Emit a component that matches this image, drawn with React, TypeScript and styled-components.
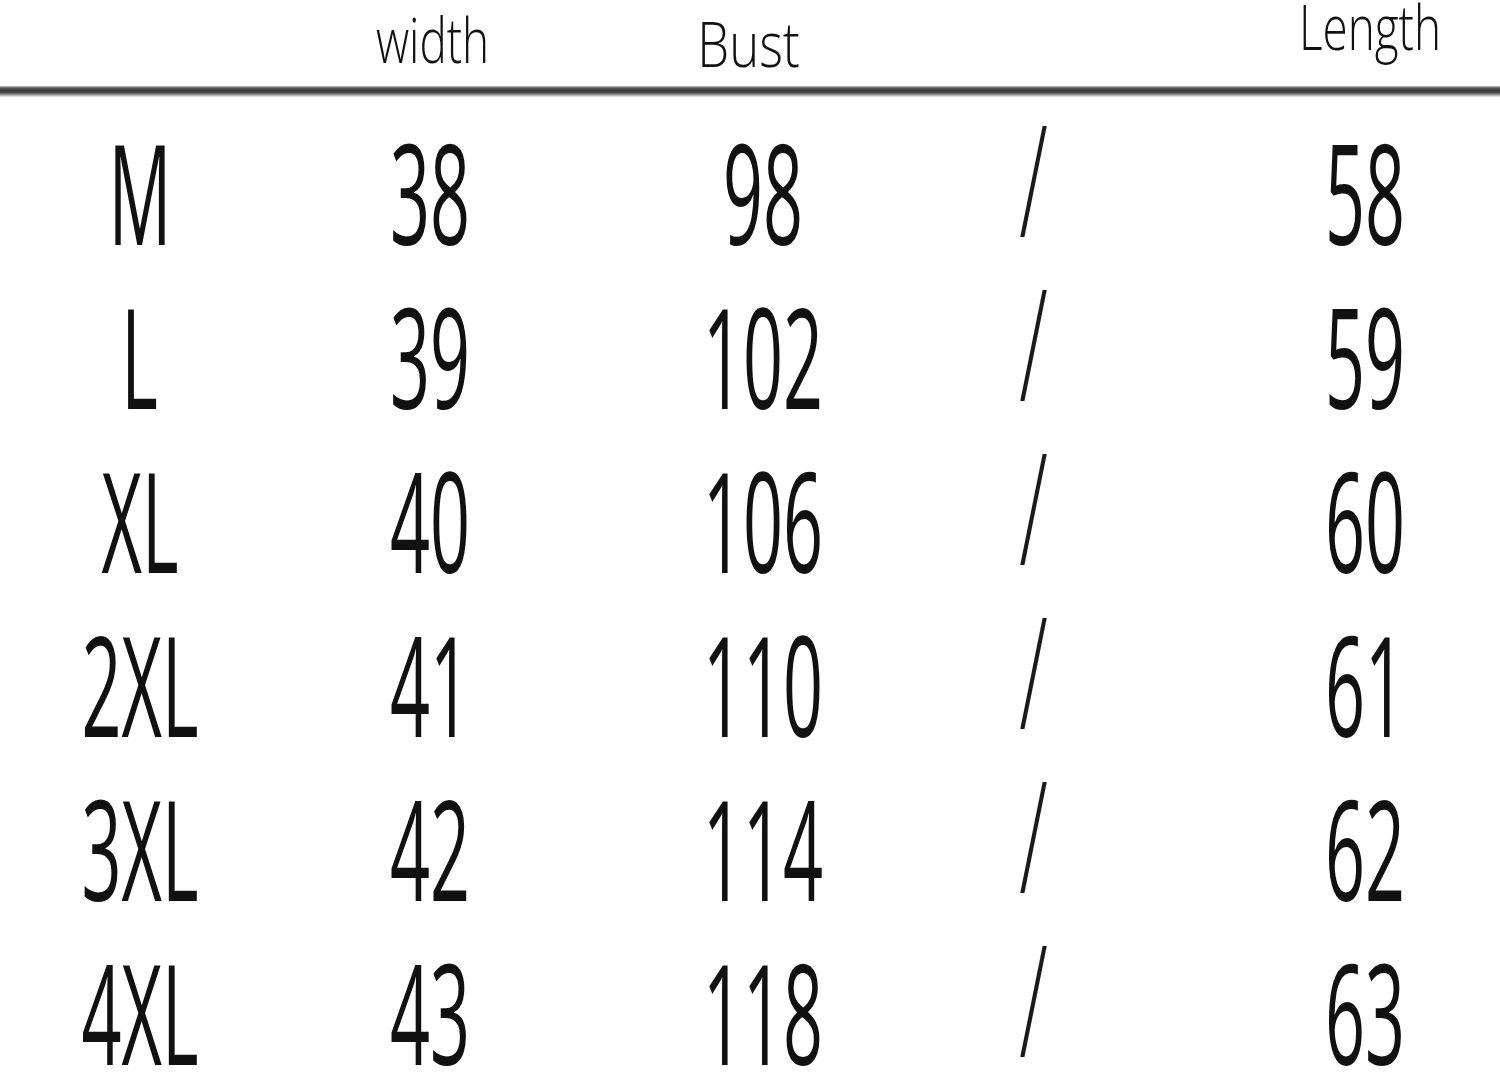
import React from "react"
import styled, { createGlobalStyle } from "styled-components"

const GlobalStyle = createGlobalStyle`
  html, body {
    margin: 0;
    padding: 0;
    background: #ffffff;
  }
  body {
    font-family: "Open Sans", "Noto Sans", sans-serif;
    color: #111;
  }
`

const Chart = styled.div`
  width: 1500px;
  height: 1082px;
  background: #ffffff;
  overflow: hidden;
`

const HeaderRow = styled.div`
  display: grid;
  grid-template-columns: 280px 306px 354px 186px 374px;
  height: 86px;
`

const HeadCell = styled.div<{ $dx?: number }>`
  display: flex;
  justify-content: center;
  align-items: flex-start;
  padding-left: ${(p) => (p.$dx && p.$dx > 0 ? p.$dx * 2 : 0)}px;
  padding-right: ${(p) => (p.$dx && p.$dx < 0 ? -p.$dx * 2 : 0)}px;
`

const HeadText = styled.span<{ $sx: number; $top: number }>`
  display: inline-block;
  margin-top: ${(p) => p.$top}px;
  font-size: 62px;
  font-weight: 300;
  line-height: 1;
  color: #111;
  transform: scaleX(${(p) => p.$sx});
  transform-origin: center;
`

const Rule = styled.div`
  height: 11px;
  background: linear-gradient(
    to bottom,
    #c8c8c8 0%,
    #5a5a5a 18%,
    #3a3a3a 40%,
    #4a4a4a 60%,
    #9a9a9a 80%,
    #f2f2f2 100%
  );
`

const Body = styled.div`
  display: flex;
  flex-direction: column;
`

const Row = styled.div`
  display: grid;
  grid-template-columns: 280px 306px 354px 186px 374px;
  height: 164px;
  padding-top: 24px;
  box-sizing: border-box;
`

const Cell = styled.div<{ $dx?: number }>`
  display: flex;
  justify-content: center;
  align-items: flex-start;
  padding-left: ${(p) => (p.$dx && p.$dx > 0 ? p.$dx * 2 : 0)}px;
  padding-right: ${(p) => (p.$dx && p.$dx < 0 ? -p.$dx * 2 : 0)}px;
`

const Value = styled.span<{ $sx?: number }>`
  display: inline-block;
  font-size: 140px;
  font-weight: 400;
  line-height: 1;
  color: #111;
  transform: scaleX(${(p) => p.$sx ?? 0.5});
  transform-origin: center;
`

const Slash = styled.span`
  display: inline-block;
  margin-top: -22px;
  font-size: 155px;
  font-weight: 300;
  line-height: 1;
  color: #1a1a1a;
  transform: scaleX(0.54);
  transform-origin: center;
`

interface SizeRow {
  size: string
  width: number
  bust: number
  length: number
}

const rows: SizeRow[] = [
  { size: "M", width: 38, bust: 98, length: 58 },
  { size: "L", width: 39, bust: 102, length: 59 },
  { size: "XL", width: 40, bust: 106, length: 60 },
  { size: "2XL", width: 41, bust: 110, length: 61 },
  { size: "3XL", width: 42, bust: 114, length: 62 },
  { size: "4XL", width: 43, bust: 118, length: 63 },
]

const App: React.FC = () => {
  return (
    <Chart>
      <GlobalStyle />
      <HeaderRow>
        <HeadCell />
        <HeadCell>
          <HeadText $sx={0.74} $top={8}>width</HeadText>
        </HeadCell>
        <HeadCell $dx={-14}>
          <HeadText $sx={0.82} $top={12}>Bust</HeadText>
        </HeadCell>
        <HeadCell />
        <HeadCell $dx={57}>
          <HeadText $sx={0.74} $top={-5}>Length</HeadText>
        </HeadCell>
      </HeaderRow>
      <Rule />
      <Body>
        {rows.map((r) => (
          <Row key={r.size}>
            <Cell>
              <Value $sx={0.5}>{r.size}</Value>
            </Cell>
            <Cell $dx={-3}>
              <Value>{r.width}</Value>
            </Cell>
            <Cell>
              <Value>{r.bust}</Value>
            </Cell>
            <Cell>
              <Slash>/</Slash>
            </Cell>
            <Cell $dx={52}>
              <Value>{r.length}</Value>
            </Cell>
          </Row>
        ))}
      </Body>
    </Chart>
  )
}

export default App
